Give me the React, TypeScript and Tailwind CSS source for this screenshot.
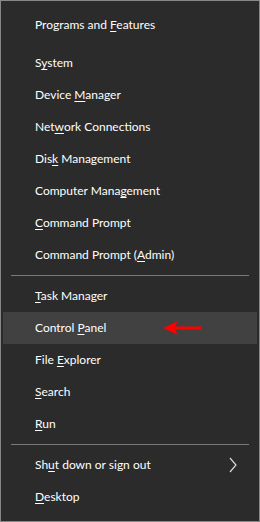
type Item = { pre: string; key: string; post: string; active?: boolean; sub?: boolean; arrow?: boolean };

const GROUPS: Item[][] = [
  [{ pre: "Programs and ", key: "F", post: "eatures" }],
  [
    { pre: "S", key: "y", post: "stem" },
    { pre: "Device ", key: "M", post: "anager" },
    { pre: "Net", key: "w", post: "ork Connections" },
    { pre: "Dis", key: "k", post: " Management" },
    { pre: "Computer Mana", key: "g", post: "ement" },
    { pre: "", key: "C", post: "ommand Prompt" },
    { pre: "Command Prompt (", key: "A", post: "dmin)" },
  ],
  [
    { pre: "", key: "T", post: "ask Manager" },
    { pre: "Control ", key: "P", post: "anel", active: true, arrow: true },
    { pre: "File ", key: "E", post: "xplorer" },
    { pre: "", key: "S", post: "earch" },
    { pre: "", key: "R", post: "un" },
  ],
  [
    { pre: "Sh", key: "u", post: "t down or sign out", sub: true },
    { pre: "", key: "D", post: "esktop" },
  ],
];

function Row({ item }: { item: Item }) {
  return (
    <div
      className={`relative flex h-8 items-center pl-8 pr-3 text-[12px] text-white ${
        item.active ? "bg-[#414141]" : ""
      }`}
    >
      <span>
        {item.pre}
        <span className="underline decoration-1 underline-offset-2">{item.key}</span>
        {item.post}
      </span>
      {item.arrow && (
        <svg className="absolute left-[157px] top-[8px]" width="46" height="16" viewBox="0 0 46 16">
          <polygon points="3,8 18,1 15,6.5 41,6.5 41,9.5 15,9.5 18,15" fill="#ff0000" />
        </svg>
      )}
      {item.sub && (
        <svg className="ml-auto mr-[8px]" width="8" height="16" viewBox="0 0 8 16">
          <polyline points="1,1 7,8 1,15" fill="none" stroke="#d8d8d8" strokeWidth="1.2" />
        </svg>
      )}
    </div>
  );
}

export default function App() {
  return (
    <div
      className="h-[522px] w-[260px] border border-[#888888] bg-[#2b2b2b] px-[2px] pt-2"
      style={{ fontFamily: 'Lato, "Noto Sans", sans-serif' }}
    >
      {GROUPS.map((g, gi) => (
        <div key={gi}>
          {gi === 1 && <div className="h-[6px]" />}
          {gi > 1 && (
            <div className="h-[9px] px-[8px] pt-[4px]">
              <div className="h-px w-full bg-[#7a7a7a]" />
            </div>
          )}
          {g.map((it, i) => (
            <Row key={i} item={it} />
          ))}
        </div>
      ))}
    </div>
  );
}
